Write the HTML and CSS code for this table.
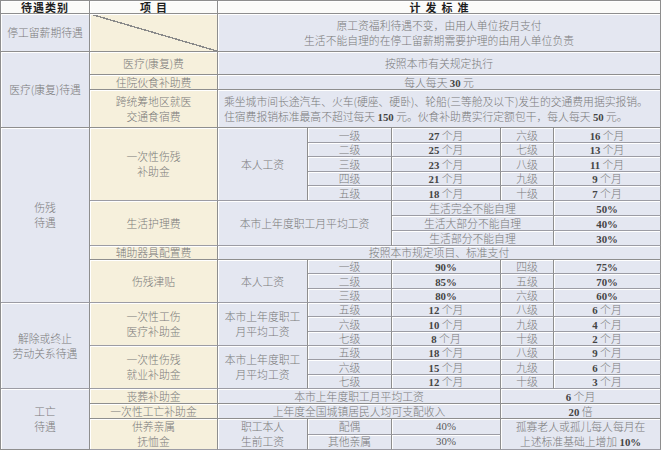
FILE: index.html
```html
<!DOCTYPE html>
<html lang="zh">
<head>
<meta charset="utf-8">
<link rel="stylesheet" href="styles.css">
</head>
<body>
<table class="grid">
  <colgroup>
    <col class="c1"><col class="c2"><col class="c3"><col class="c4"><col class="c5"><col class="c6"><col class="c7">
  </colgroup>
  <tr class="rh13 head">
    <td class="cat">待遇类别</td>
    <td class="itm">项&nbsp;&nbsp;目</td>
    <td colspan="5">计&nbsp;&nbsp;发&nbsp;&nbsp;标&nbsp;&nbsp;准</td>
  </tr>
  <tr class="rh38">
    <td class="cat">停工留薪期待遇</td>
    <td class="itm diag"></td>
    <td colspan="5" class="two">原工资福利待遇不变，由用人单位按月支付<br>生活不能自理的在停工留薪期需要护理的由用人单位负责</td>
  </tr>
  <tr class="rh23">
    <td class="cat" rowspan="3">医疗(康复)待遇</td>
    <td class="itm">医疗(康复)费</td>
    <td colspan="5">按照本市有关规定执行</td>
  </tr>
  <tr class="rh15">
    <td class="itm">住院伙食补助费</td>
    <td colspan="5">每人每天 <b>30</b> 元</td>
  </tr>
  <tr class="rh38">
    <td class="itm two">跨统筹地区就医<br>交通食宿费</td>
    <td colspan="5" class="left two">乘坐城市间长途汽车、火车(硬座、硬卧)、轮船(三等舱及以下)发生的交通费用据实报销。<br>住宿费报销标准最高不超过每天 <b>150</b> 元。伙食补助费实行定额包干，每人每天 <b>50</b> 元。</td>
  </tr>

  <tr class="rh15 sub">
    <td class="cat two" rowspan="12">伤残<br>待遇</td>
    <td class="itm two" rowspan="5">一次性伤残<br>补助金</td>
    <td rowspan="5">本人工资</td>
    <td>一级</td><td><b>27</b> 个月</td><td>六级</td><td><b>16</b> 个月</td>
  </tr>
  <tr class="rh14 sub"><td>二级</td><td><b>25</b> 个月</td><td>七级</td><td><b>13</b> 个月</td></tr>
  <tr class="rh15 sub"><td>三级</td><td><b>23</b> 个月</td><td>八级</td><td><b>11</b> 个月</td></tr>
  <tr class="rh14 sub"><td>四级</td><td><b>21</b> 个月</td><td>九级</td><td><b>9</b> 个月</td></tr>
  <tr class="rh15 sub"><td>五级</td><td><b>18</b> 个月</td><td>十级</td><td><b>7</b> 个月</td></tr>

  <tr class="rh15 sub">
    <td class="itm" rowspan="3">生活护理费</td>
    <td colspan="2" rowspan="3">本市上年度职工月平均工资</td>
    <td colspan="2">生活完全不能自理</td><td><b>50%</b></td>
  </tr>
  <tr class="rh15 sub"><td colspan="2">生活大部分不能自理</td><td><b>40%</b></td></tr>
  <tr class="rh15 sub"><td colspan="2">生活部分不能自理</td><td><b>30%</b></td></tr>

  <tr class="rh14">
    <td class="itm">辅助器具配置费</td>
    <td colspan="5">按照本市规定项目、标准支付</td>
  </tr>

  <tr class="rh14 sub">
    <td class="itm" rowspan="3">伤残津贴</td>
    <td rowspan="3">本人工资</td>
    <td>一级</td><td><b>90%</b></td><td>四级</td><td><b>75%</b></td>
  </tr>
  <tr class="rh15 sub"><td>二级</td><td><b>85%</b></td><td>五级</td><td><b>70%</b></td></tr>
  <tr class="rh14 sub"><td>三级</td><td><b>80%</b></td><td>六级</td><td><b>60%</b></td></tr>

  <tr class="rh14 sub">
    <td class="cat two" rowspan="6">解除或终止<br>劳动关系待遇</td>
    <td class="itm two" rowspan="3">一次性工伤<br>医疗补助金</td>
    <td class="two" rowspan="3">本市上年度职工<br>月平均工资</td>
    <td>五级</td><td><b>12</b> 个月</td><td>八级</td><td><b>6</b> 个月</td>
  </tr>
  <tr class="rh15 sub"><td>六级</td><td><b>10</b> 个月</td><td>九级</td><td><b>4</b> 个月</td></tr>
  <tr class="rh14 sub"><td>七级</td><td><b>8</b> 个月</td><td>十级</td><td><b>2</b> 个月</td></tr>

  <tr class="rh14 sub">
    <td class="itm two" rowspan="3">一次性伤残<br>就业补助金</td>
    <td class="two" rowspan="3">本市上年度职工<br>月平均工资</td>
    <td>五级</td><td><b>18</b> 个月</td><td>八级</td><td><b>9</b> 个月</td>
  </tr>
  <tr class="rh15 sub"><td>六级</td><td><b>15</b> 个月</td><td>九级</td><td><b>6</b> 个月</td></tr>
  <tr class="rh14 sub"><td>七级</td><td><b>12</b> 个月</td><td>十级</td><td><b>3</b> 个月</td></tr>

  <tr class="rh15">
    <td class="cat two" rowspan="4">工亡<br>待遇</td>
    <td class="itm">丧葬补助金</td>
    <td colspan="3">本市上年度职工月平均工资</td>
    <td colspan="2"><b>6</b> 个月</td>
  </tr>
  <tr class="rh15">
    <td class="itm">一次性工亡补助金</td>
    <td colspan="3">上年度全国城镇居民人均可支配收入</td>
    <td colspan="2"><b>20</b> 倍</td>
  </tr>
  <tr class="rh15 sub">
    <td class="itm two" rowspan="2">供养亲属<br>抚恤金</td>
    <td class="two" rowspan="2">职工本人<br>生前工资</td>
    <td>配偶</td><td class="pct">40%</td>
    <td class="two" colspan="2" rowspan="2">孤寡老人或孤儿每人每月在<br>上述标准基础上增加 <b>10%</b></td>
  </tr>
  <tr class="rh15 sub"><td>其他亲属</td><td class="pct">30%</td></tr>
</table>
</body>
</html>
```

FILE: styles.css
```css
html, body {
  margin: 0;
  padding: 0;
  background: #ffffff;
}

.grid {
  width: 661px;
  table-layout: fixed;
  border-collapse: separate;
  border-spacing: 0;
  border-top: 1px solid #8e8e8e;
  border-left: 1px solid #8e8e8e;
  font-family: "Noto Sans CJK SC", "Liberation Serif", sans-serif;
  font-size: 10.8px;
  font-weight: 300;
  line-height: 13px;
  color: #7a7a7a;
}

.c1 { width: 89px; }
.c2 { width: 128px; }
.c3 { width: 90px; }
.c4 { width: 84px; }
.c5 { width: 109px; }
.c6 { width: 53px; }
.c7 { width: 107px; }

.grid td {
  padding: 0;
  text-align: center;
  vertical-align: middle;
  white-space: nowrap;
  overflow: hidden;
  background: #e4e7f1;
  border-right: 1px solid #8e8e8e;
  border-bottom: 1px solid #8e8e8e;
  box-shadow: inset 1px 1px 0 #ffffff;
}

.grid td.two {
  line-height: 15px;
}

.grid .sub td {
  border-bottom-color: #9c9ca4;
}

.grid td.itm {
  background: #f6f0dc;
}

.grid td.cat {
  background: #e4e7f1;
}

.grid td.left {
  text-align: left;
  padding-left: 6px;
}

.grid td.diag {
  background: #f6f0dc linear-gradient(to top right,
    transparent calc(50% - 0.7px),
    #8a8a8a calc(50% - 0.7px),
    #8a8a8a calc(50% + 0.7px),
    transparent calc(50% + 0.7px));
}

.head td,
.head td.itm,
.head td.cat {
  background: #fbfbf9;
  color: #1e1e1e;
  font-weight: bold;
  font-size: 11px;
  line-height: 12px;
}

.head td.cat {
  letter-spacing: 1px;
}

.grid b {
  font-family: "Liberation Serif", serif;
  font-weight: bold;
  color: #444444;
  line-height: 1;
}

.grid td.pct {
  font-family: "Liberation Serif", serif;
  color: #5a5a5a;
}

.rh13 { height: 13px; }
.rh14 { height: 14px; }
.rh15 { height: 15px; }
.rh23 { height: 23px; }
.rh38 { height: 38px; }
```
